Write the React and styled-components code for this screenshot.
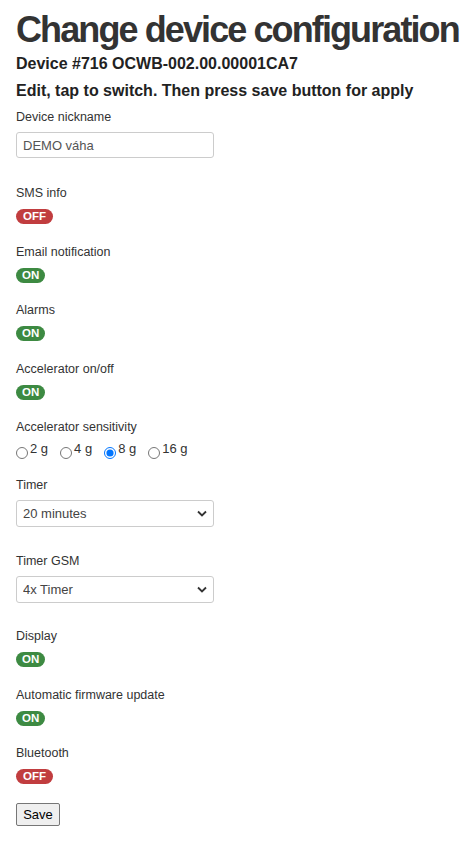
import * as React from 'react';
import styled, { createGlobalStyle } from 'styled-components';

const GlobalStyle = createGlobalStyle`
	body {
		margin: 0;
		background: #fff;
		font-family: "Liberation Sans", Arial, sans-serif;
		color: #333;
	}
`;

const Page = styled.div`
	padding: 10px 16px 20px;
`;

const Title = styled.h1`
	margin: 0;
	font-size: 36px;
	line-height: 40px;
	font-weight: bold;
	letter-spacing: -1.9px;
	white-space: nowrap;
	color: #333;
`;

const Subtitle = styled.h4`
	margin: ${({ first }) => first ? '4px' : '7px'} 0 0;
	font-size: 16px;
	line-height: 20px;
	font-weight: bold;
	color: #222;
`;

const Form = styled.form`
	display: flex;
	flex-direction: column;
	margin-top: 9px;
`;

const Field = styled.div`
	display: flex;
	flex-direction: column;
	align-items: flex-start;
	margin-bottom: ${({ gap }) => gap}px;
`;

const Label = styled.label`
	font-size: 12.5px;
	line-height: 15px;
	margin-bottom: 7px;
	color: #333;
`;

const TextInput = styled.input`
	box-sizing: border-box;
	width: 198px;
	height: 26px;
	padding: 0 6px;
	border: 1px solid #ccc;
	border-radius: 3px;
	font: 13px "Liberation Sans", Arial, sans-serif;
	color: #555;
	outline: none;
`;

const Badge = styled.span`
	display: inline-block;
	height: 15px;
	line-height: 15px;
	padding: 0 ${({ on }) => on ? 6 : 7}px;
	border-radius: 8px;
	font-size: 11.5px;
	font-weight: bold;
	color: #fff;
	background: ${({ on }) => on ? '#3d8a42' : '#c13d3f'};
	margin-top: 1px;
`;

const RadioRow = styled.div`
	display: flex;
	gap: 12px;
`;

const RadioLabel = styled.label`
	display: inline-flex;
	align-items: flex-start;
	font-size: 13px;
	line-height: 14px;
	color: #333;
`;

const Radio = styled.input`
	width: 12px;
	height: 12px;
	margin: 5px 2px 0 0;
	accent-color: #0075ff;
`;

const SelectWrap = styled.div`
	position: relative;
	width: 198px;
`;

const Select = styled.select`
	box-sizing: border-box;
	width: 198px;
	height: 27px;
	padding: 0 6px;
	border: 1px solid #ccc;
	border-radius: 3px;
	background: #fff;
	appearance: none;
	font: 13px "Liberation Sans", Arial, sans-serif;
	color: #444;
	outline: none;
`;

const Chevron = styled.svg`
	position: absolute;
	right: 7px;
	top: 10px;
	pointer-events: none;
`;

const SaveButton = styled.button`
	width: 44px;
	height: 23px;
	padding: 0;
	border: 1px solid #767676;
	border-radius: 2px;
	background: #efefef;
	font: 13px "Liberation Sans", Arial, sans-serif;
	color: #000;
`;

const Toggle = ({ label, on, gap = 20.5 }) => (
	<Field gap={gap}>
		<Label>{label}</Label>
		<Badge on={on ? 1 : 0}>{on ? 'ON' : 'OFF'}</Badge>
	</Field>
);

const Dropdown = ({ label, value, options, gap }) => (
	<Field gap={gap}>
		<Label>{label}</Label>
		<SelectWrap>
			<Select defaultValue={value}>
				{options.map(o => <option key={o}>{o}</option>)}
			</Select>
			<Chevron width="10" height="7" viewBox="0 0 10 7">
				<path d="M1 1.5 L5 5.5 L9 1.5" fill="none" stroke="#333" strokeWidth="1.8" />
			</Chevron>
		</SelectWrap>
	</Field>
);

const sensitivities = ['2 g', '4 g', '8 g', '16 g'];

export default function App() {
	return (
		<Page>
			<GlobalStyle />
			<Title>Change device configuration</Title>
			<Subtitle first>Device #716 OCWB-002.00.00001CA7</Subtitle>
			<Subtitle>Edit, tap to switch. Then press save button for apply</Subtitle>
			<Form onSubmit={e => e.preventDefault()}>
				<Field gap={28}>
					<Label>Device nickname</Label>
					<TextInput defaultValue="DEMO váha" />
				</Field>
				<Toggle label="SMS info" on={false} />
				<Toggle label="Email notification" on />
				<Toggle label="Alarms" on />
				<Toggle label="Accelerator on/off" on />
				<Field gap={19}>
					<Label>Accelerator sensitivity</Label>
					<RadioRow>
						{sensitivities.map(s => (
							<RadioLabel key={s}>
								<Radio type="radio" name="sens" defaultChecked={s === '8 g'} />
								{s}
							</RadioLabel>
						))}
					</RadioRow>
				</Field>
				<Dropdown label="Timer" value="20 minutes" gap={27}
					options={['5 minutes', '10 minutes', '20 minutes', '30 minutes', '60 minutes']} />
				<Dropdown label="Timer GSM" value="4x Timer" gap={26}
					options={['1x Timer', '2x Timer', '4x Timer', '8x Timer']} />
				<Toggle label="Display" on />
				<Toggle label="Automatic firmware update" on />
				<Toggle label="Bluetooth" on={false} gap={19} />
				<div>
					<SaveButton type="submit">Save</SaveButton>
				</div>
			</Form>
		</Page>
	);
}
